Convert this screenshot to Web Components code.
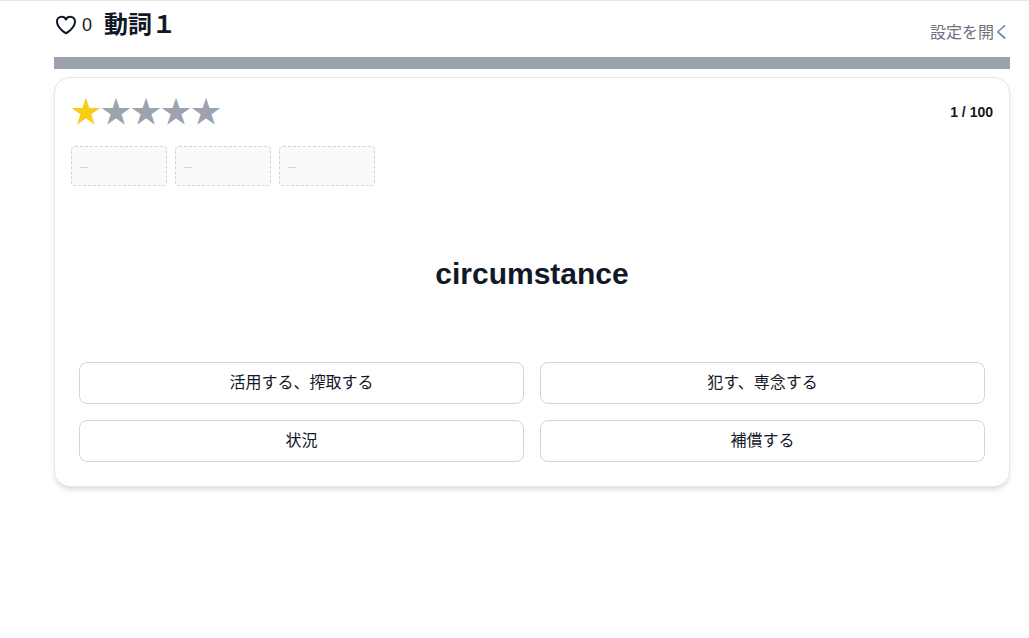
<!DOCTYPE html>
<html lang="ja">
<head>
<meta charset="utf-8">
<title>動詞１</title>
<style>
  html, body { margin: 0; padding: 0; background: #fff; }
  body {
    font-family: "Liberation Sans", "Noto Sans CJK JP", sans-serif;
    color: #111827;
    height: 638px;
    overflow: hidden;
  }
</style>
</head>
<body>
<quiz-page>
  <quiz-header slot="header" likes="0" title-text="動詞１"></quiz-header>
  <quiz-card slot="card" rating="1" progress="1 / 100" word="circumstance">
    <quiz-choice>活用する、搾取する</quiz-choice>
    <quiz-choice>犯す、専念する</quiz-choice>
    <quiz-choice>状況</quiz-choice>
    <quiz-choice>補償する</quiz-choice>
  </quiz-card>
</quiz-page>

<script>
const pageTemplate = document.createElement('template');
pageTemplate.innerHTML = `
  <style>
    :host {
      display: block;
      border-top: 1px solid #e5e7eb;
      padding: 0 19px 0 54px;
    }
    #bar {
      height: 12px;
      background-color: #9ca3af;
      margin-bottom: 8px;
    }
  </style>
  <slot name="header"></slot>
  <div id="bar"></div>
  <slot name="card"></slot>
`;

class QuizPage extends HTMLElement {
  constructor() {
    super();
    this.attachShadow({mode: 'open'});
    this.shadowRoot.appendChild(pageTemplate.content.cloneNode(true));
  }
}
customElements.define('quiz-page', QuizPage);

const headerTemplate = document.createElement('template');
headerTemplate.innerHTML = `
  <style>
    :host {
      display: flex;
      justify-content: space-between;
      height: 56px;
    }
    #left {
      display: flex;
      align-items: center;
      height: 48px;
    }
    svg {
      display: block;
      width: 24px;
      height: 24px;
      margin-right: 4px;
    }
    #count {
      font-size: 18px;
      line-height: 24px;
      width: 22px;
      color: #111827;
    }
    h1 {
      margin: 0;
      font-size: 24px;
      line-height: 32px;
      font-weight: 700;
      color: #111827;
    }
    a {
      align-self: flex-end;
      margin-bottom: 12px;
      font-size: 16px;
      line-height: 24px;
      color: #6b7280;
      text-decoration: none;
    }
  </style>
  <div id="left">
    <svg viewBox="0 0 24 24" fill="none" stroke="#111827" stroke-width="2" stroke-linejoin="round" stroke-linecap="round">
      <path d="M21 8.250c0-2.485-2.099-4.500-4.688-4.500-1.935 0-3.597 1.126-4.312 2.733-.715-1.607-2.377-2.733-4.313-2.733C5.100 3.750 3 5.765 3 8.250c0 7.220 9 12 9 12s9-4.780 9-12z"/>
    </svg>
    <span id="count"></span>
    <h1 id="title"></h1>
  </div>
  <a href="#">設定を開く</a>
`;

class QuizHeader extends HTMLElement {
  constructor() {
    super();
    this.attachShadow({mode: 'open'});
    this.shadowRoot.appendChild(headerTemplate.content.cloneNode(true));
    this.shadowRoot.getElementById('count').textContent = this.getAttribute('likes');
    this.shadowRoot.getElementById('title').textContent = this.getAttribute('title-text');
  }
}
customElements.define('quiz-header', QuizHeader);

const cardTemplate = document.createElement('template');
cardTemplate.innerHTML = `
  <style>
    :host {
      display: block;
      box-sizing: border-box;
      height: 410px;
      padding: 16px;
      background-color: #fff;
      border: 1px solid #e5e7eb;
      border-radius: 16px;
      box-shadow: 0 4px 6px -1px rgba(0,0,0,.1), 0 2px 4px -2px rgba(0,0,0,.1);
    }
    #top {
      display: flex;
      justify-content: space-between;
      align-items: center;
      height: 36px;
    }
    #stars {
      display: flex;
      font-family: "Noto Sans CJK JP", sans-serif;
      font-size: 30px;
      line-height: 30px;
      height: 36px;
    }
    #stars span { color: #9ca3af; }
    #stars span.on { color: #facc15; }
    #progress {
      font-size: 14px;
      font-weight: 700;
      color: #111827;
    }
    #slots {
      display: flex;
      gap: 8px;
      margin-top: 16px;
    }
    #word {
      margin: 0;
      height: 176px;
      display: flex;
      align-items: center;
      justify-content: center;
      font-size: 30px;
      line-height: 36px;
      font-weight: 700;
      color: #111827;
    }
    #choices {
      display: grid;
      grid-template-columns: 1fr 1fr;
      gap: 16px;
      padding: 0 8px;
    }
  </style>
  <div id="top">
    <div id="stars"></div>
    <div id="progress"></div>
  </div>
  <div id="slots">
    <answer-slot></answer-slot>
    <answer-slot></answer-slot>
    <answer-slot></answer-slot>
  </div>
  <h2 id="word"></h2>
  <div id="choices"><slot></slot></div>
`;

class QuizCard extends HTMLElement {
  constructor() {
    super();
    this.attachShadow({mode: 'open'});
    this.shadowRoot.appendChild(cardTemplate.content.cloneNode(true));
    const rating = Number(this.getAttribute('rating'));
    let stars = '';
    for (let i = 0; i < 5; i++) {
      stars += `<span class="${i < rating ? 'on' : ''}">★</span>`;
    }
    this.shadowRoot.getElementById('stars').innerHTML = stars;
    this.shadowRoot.getElementById('progress').textContent = this.getAttribute('progress');
    this.shadowRoot.getElementById('word').textContent = this.getAttribute('word');
  }
}
customElements.define('quiz-card', QuizCard);

const slotTemplate = document.createElement('template');
slotTemplate.innerHTML = `
  <style>
    :host {
      display: flex;
      align-items: center;
      box-sizing: border-box;
      width: 96px;
      height: 40px;
      padding: 0 8px;
      background-color: #f9fafb;
      border: 1px dashed #d1d5db;
      border-radius: 4px;
      font-size: 14px;
      color: #d1d5db;
    }
  </style>
  –
`;

class AnswerSlot extends HTMLElement {
  constructor() {
    super();
    this.attachShadow({mode: 'open'});
    this.shadowRoot.appendChild(slotTemplate.content.cloneNode(true));
  }
}
customElements.define('answer-slot', AnswerSlot);

const choiceTemplate = document.createElement('template');
choiceTemplate.innerHTML = `
  <style>
    :host {
      display: flex;
      align-items: center;
      justify-content: center;
      box-sizing: border-box;
      height: 42px;
      padding-bottom: 4px;
      background-color: #fff;
      border: 1px solid #d1d5db;
      border-radius: 8px;
      font-size: 16px;
      color: #111827;
      cursor: pointer;
    }
  </style>
  <slot></slot>
`;

class QuizChoice extends HTMLElement {
  constructor() {
    super();
    this.attachShadow({mode: 'open'});
    this.shadowRoot.appendChild(choiceTemplate.content.cloneNode(true));
  }
}
customElements.define('quiz-choice', QuizChoice);
</script>
</body>
</html>
